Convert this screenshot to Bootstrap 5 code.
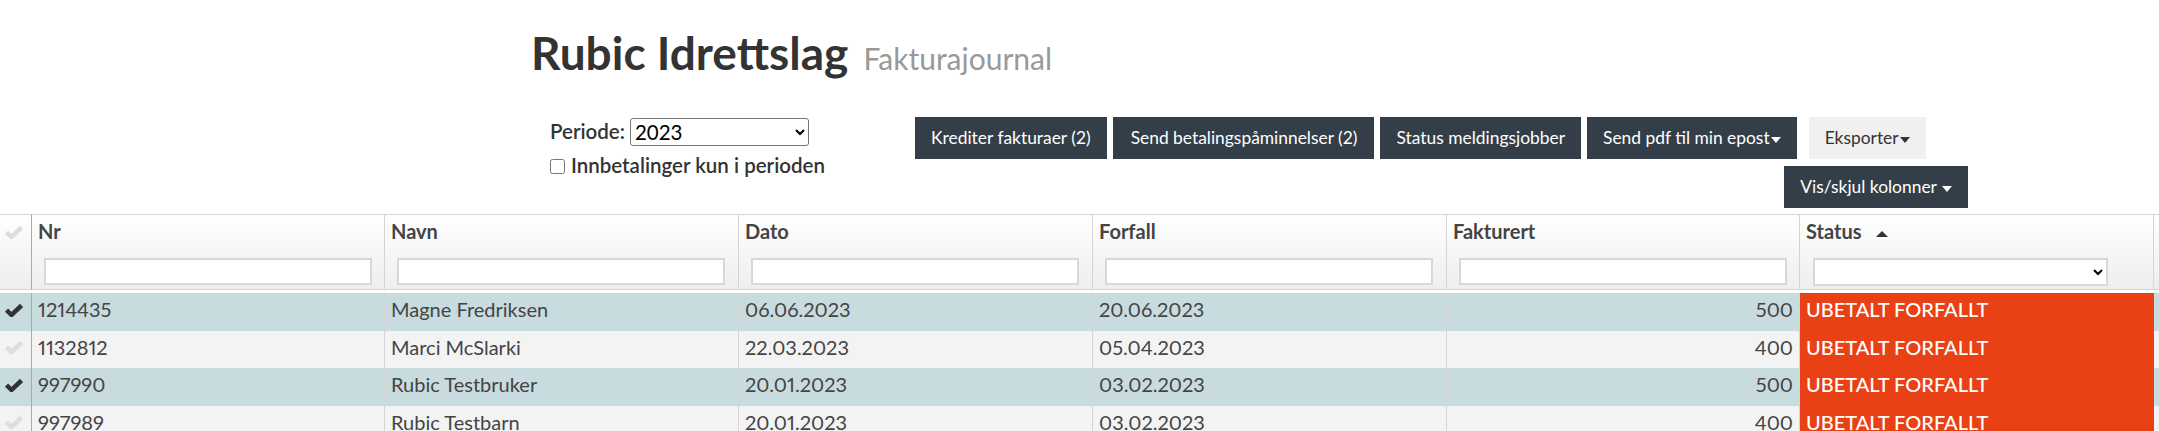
<!DOCTYPE html>
<html lang="no">
<head>
    <meta charset="UTF-8">
    <title>Fakturajournal</title>
    <link rel="stylesheet" href="https://cdn.jsdelivr.net/npm/bootstrap@5.3.0/dist/css/bootstrap.min.css">
    <style>
        html, body { height: 431px; overflow: hidden; }
        body { font-family: Lato, "Open Sans", sans-serif; font-variant-numeric: proportional-nums; color: #333; background: #fff; }
        .page-head { padding: 27px 0 0 531px; height: 117px; }
        .page-head h1 { font-size: 46px; line-height: 52px; font-weight: 700; margin: 0; color: #333; }
        .page-head h1 span { font-size: 30px; font-weight: 400; color: #999; margin-left: 4px; }
        .tools { padding-left: 550px; height: 97px; }
        .filter-box { width: 365px; font-size: 20.5px; font-weight: 600; line-height: 28px; }
        .filter-box label { padding-bottom: 2px; }
        .filter-box select { width: 179px; height: 28px; font-size: 20.5px; font-weight: 400; margin-left: 5px; background: #fff; border: 1px solid #767676; border-radius: 3px; }
        .filter-box input { width: 15px; height: 15px; margin-right: 6px; }
        .filter-line { margin-top: 4px; }
        .btn-box { width: 1053px; }
        .btn-line { gap: 6px; margin-bottom: 7px; }
        .dark-btn, .light-btn { border: 0; border-radius: 0; height: 42px; font-size: 17.4px; padding: 0 16px; white-space: nowrap; }
        .dark-btn { background: #343e48; color: #fff; }
        .light-btn { background: #f0f0f0; color: #333; margin-left: 6px; }
        .dark-btn:hover { background: #343e48; color: #fff; }
        .wide-btn { padding: 0 17px 0 18px; }
        .caret-down { display: inline-block; border-top: 6px solid currentColor; border-left: 5px solid transparent; border-right: 5px solid transparent; vertical-align: middle; margin-left: 1px; }
        .sort-up { display: inline-block; border-bottom: 6px solid #333; border-left: 6px solid transparent; border-right: 6px solid transparent; vertical-align: middle; margin-left: 10px; }
        .invoice-table { table-layout: fixed; width: 2159px; margin: 0; border-collapse: separate; border-spacing: 0; font-size: 20px; color: #444; }
        .invoice-table th, .invoice-table td { padding: 0 6px; border: 0; border-right: 1px solid #d4d4d4; box-shadow: none; }
        .invoice-table thead th { height: 76px; vertical-align: top; border-top: 1px solid #d4d4d4; border-bottom: 1px solid #d4d4d4; background: linear-gradient(#fff, #eee); font-weight: 700; line-height: 22px; padding-top: 5px; color: #444; }
        .invoice-table thead th:first-child, .invoice-table tbody td:first-child { border-right: 1px solid #aaa; padding: 0 4px 0 0; text-align: center; }
        .invoice-table thead th:last-child, .invoice-table tbody td:last-child { border-right: 0; padding: 0; }
        .invoice-table tbody::before { content: ""; display: table-row; height: 3px; }
        .invoice-table tbody td { height: 37.5px; line-height: 26px; vertical-align: middle; padding-bottom: 5px; }
        .invoice-table tbody td:first-child { padding-bottom: 4px; }
        .invoice-table tr.row-on td { background: #c8dbdf; }
        .invoice-table tr.row-off td { background: #f3f3f3; }
        .invoice-table tbody td.late-cell { background: #e94115; color: #fff; border-right: 0; font-weight: 500; }
        .head-input { display: block; width: 328px; height: 27px; margin: 16px 0 0 6px; border: 2px solid #d8d8d8; background: #fff; }
        .head-select { display: block; width: 295px; height: 28px; margin: 16px 0 0 7px; border: 2px solid #d8d8d8; background: #fff; border-radius: 0; }
        .tick { width: 18px; height: 14px; display: block; margin: 0 auto; }
        .tick-head { margin-top: 10px; }
    </style>
</head>
<body>
    <div class="page-head">
        <h1>Rubic Idrettslag <span>Fakturajournal</span></h1>
    </div>

    <div class="tools d-flex">
        <div class="filter-box">
            <div class="d-flex align-items-center">
                <label for="periode">Periode:</label>
                <select id="periode"><option>2023</option></select>
            </div>
            <div class="filter-line d-flex align-items-center">
                <input type="checkbox" id="kunPeriode">
                <label for="kunPeriode">Innbetalinger kun i perioden</label>
            </div>
        </div>
        <div class="btn-box">
            <div class="btn-line d-flex">
                <button class="btn dark-btn">Krediter fakturaer (2)</button>
                <button class="btn dark-btn wide-btn">Send betalingspåminnelser (2)</button>
                <button class="btn dark-btn">Status meldingsjobber</button>
                <button class="btn dark-btn">Send pdf til min epost<span class="caret-down"></span></button>
                <button class="btn light-btn">Eksporter<span class="caret-down"></span></button>
            </div>
            <div class="d-flex justify-content-end">
                <button class="btn dark-btn">Vis/skjul kolonner <span class="caret-down"></span></button>
            </div>
        </div>
    </div>

    <table class="table invoice-table">
        <colgroup>
            <col style="width: 32px">
            <col style="width: 353px">
            <col style="width: 354px">
            <col style="width: 354px">
            <col style="width: 354px">
            <col style="width: 353px">
            <col style="width: 354px">
            <col style="width: 5px">
        </colgroup>
        <thead>
            <tr>
                <th><svg class="tick tick-head" viewBox="0 0 18 14"><path d="M1.5 7 6.5 12 16.5 2.5" fill="none" stroke="#ddd" stroke-width="4.5"/></svg></th>
                <th>Nr<input class="head-input" type="text"></th>
                <th>Navn<input class="head-input" type="text"></th>
                <th>Dato<input class="head-input" type="text"></th>
                <th>Forfall<input class="head-input" type="text"></th>
                <th>Fakturert<input class="head-input" type="text"></th>
                <th>Status <span class="sort-up"></span><select class="head-select"><option></option></select></th>
                <th></th>
            </tr>
        </thead>
        <tbody id="rows"></tbody>
    </table>

    <script>
        const invoices = [
            { nr: "1214435", navn: "Magne Fredriksen", dato: "06.06.2023", forfall: "20.06.2023", sum: 500, on: true },
            { nr: "1132812", navn: "Marci McSlarki", dato: "22.03.2023", forfall: "05.04.2023", sum: 400, on: false },
            { nr: "997990", navn: "Rubic Testbruker", dato: "20.01.2023", forfall: "03.02.2023", sum: 500, on: true },
            { nr: "997989", navn: "Rubic Testbarn", dato: "20.01.2023", forfall: "03.02.2023", sum: 400, on: false }
        ];

        document.getElementById("rows").innerHTML = invoices.map(inv => `
            <tr class="${inv.on ? "row-on" : "row-off"}">
                <td><svg class="tick" viewBox="0 0 18 14"><path d="M1.5 7 6.5 12 16.5 2.5" fill="none" stroke="${inv.on ? "#333" : "#ddd"}" stroke-width="4.5"/></svg></td>
                <td>${inv.nr}</td>
                <td>${inv.navn}</td>
                <td>${inv.dato}</td>
                <td>${inv.forfall}</td>
                <td class="text-end">${inv.sum}</td>
                <td class="late-cell">UBETALT FORFALLT</td>
                <td></td>
            </tr>`).join("");
    </script>

    <script src="https://cdn.jsdelivr.net/npm/bootstrap@5.3.0/dist/js/bootstrap.bundle.min.js"></script>
</body>
</html>
